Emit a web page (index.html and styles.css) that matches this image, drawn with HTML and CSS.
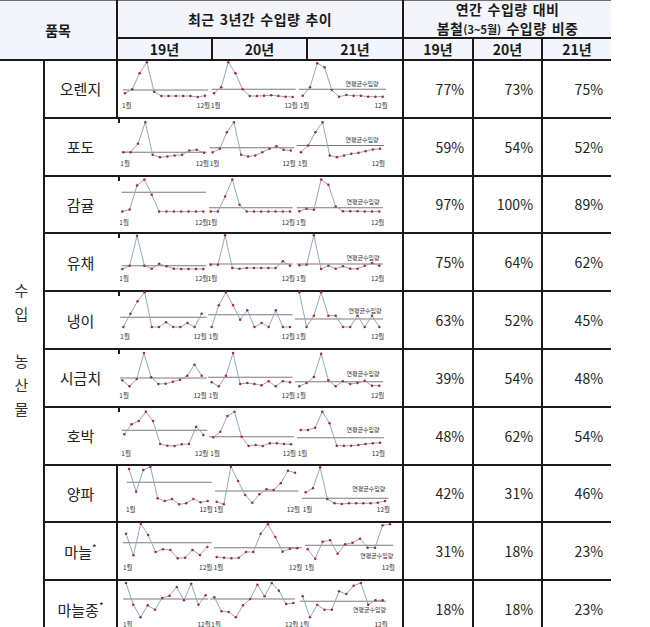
FILE: index.html
```html
<!DOCTYPE html>
<html lang="ko">
<head>
<meta charset="utf-8">
<title>수입 농산물 수입량 추이</title>
<link rel="stylesheet" href="styles.css">
</head>
<body>
<table class="tbl">
  <colgroup>
    <col class="c-cat"><col class="c-item"><col class="c-yr"><col class="c-yr"><col class="c-yr3"><col class="c-pct"><col class="c-pct2"><col class="c-pct2">
  </colgroup>
  <thead>
    <tr class="h1">
      <th colspan="2" rowspan="2" class="h-item">품목</th>
      <th colspan="3" class="h-trend">최근 3년간 수입량 추이</th>
      <th colspan="3" class="h-share"><div class="two"><span>연간 수입량 대비</span><span>봄철<small>(3~5월)</small> 수입량 비중</span></div></th>
    </tr>
    <tr class="h2">
      <th>19년</th><th>20년</th><th>21년</th><th>19년</th><th>20년</th><th class="last">21년</th>
    </tr>
  </thead>
  <tbody>
    <tr>
      <td rowspan="10" class="cat"><div class="vtext"><span>수</span><span>입</span><span class="gap"></span><span>농</span><span>산</span><span>물</span></div></td>
      <td class="item">오렌지</td>
      <td colspan="3" class="chart"><svg class="spark" width="286" height="54"></svg></td>
      <td class="pct">77%</td><td class="pct">73%</td><td class="pct last">75%</td>
    </tr>
    <tr>
      <td class="item">포도</td>
      <td colspan="3" class="chart nol"><svg class="spark" width="286" height="54"></svg></td>
      <td class="pct">59%</td><td class="pct">54%</td><td class="pct last">52%</td>
    </tr>
    <tr>
      <td class="item">감귤</td>
      <td colspan="3" class="chart nol"><svg class="spark" width="286" height="54"></svg></td>
      <td class="pct">97%</td><td class="pct">100%</td><td class="pct last">89%</td>
    </tr>
    <tr>
      <td class="item">유채</td>
      <td colspan="3" class="chart nol"><svg class="spark" width="286" height="54"></svg></td>
      <td class="pct">75%</td><td class="pct">64%</td><td class="pct last">62%</td>
    </tr>
    <tr>
      <td class="item">냉이</td>
      <td colspan="3" class="chart nol"><svg class="spark" width="286" height="54"></svg></td>
      <td class="pct">63%</td><td class="pct">52%</td><td class="pct last">45%</td>
    </tr>
    <tr>
      <td class="item">시금치</td>
      <td colspan="3" class="chart nol"><svg class="spark" width="286" height="54"></svg></td>
      <td class="pct">39%</td><td class="pct">54%</td><td class="pct last">48%</td>
    </tr>
    <tr>
      <td class="item">호박</td>
      <td colspan="3" class="chart nol"><svg class="spark" width="286" height="54"></svg></td>
      <td class="pct">48%</td><td class="pct">62%</td><td class="pct last">54%</td>
    </tr>
    <tr>
      <td class="item">양파</td>
      <td colspan="3" class="chart"><svg class="spark" width="286" height="54"></svg></td>
      <td class="pct">42%</td><td class="pct">31%</td><td class="pct last">46%</td>
    </tr>
    <tr>
      <td class="item">마늘<sup class="ast">*</sup></td>
      <td colspan="3" class="chart"><svg class="spark" width="286" height="54"></svg></td>
      <td class="pct">31%</td><td class="pct">18%</td><td class="pct last">23%</td>
    </tr>
    <tr>
      <td class="item">마늘종<sup class="ast">*</sup></td>
      <td colspan="3" class="chart"><svg class="spark" width="286" height="54"></svg></td>
      <td class="pct">18%</td><td class="pct">18%</td><td class="pct last">23%</td>
    </tr>
  </tbody>
</table>
<script src="charts.js"></script>
</body>
</html>
```

FILE: styles.css
```css
html, body {
  margin: 0;
  padding: 0;
  background: #ffffff;
}

body {
  font-family: "Noto Sans CJK KR", "Noto Sans", sans-serif;
  color: #222222;
}

.tbl {
  border-collapse: collapse;
  table-layout: fixed;
  width: 611px;
  border-top: 1px solid #6f6f6f;
}

.c-cat { width: 44px; }
.c-item { width: 73px; }
.c-yr { width: 95px; }
.c-yr3 { width: 96px; }
.c-pct { width: 70px; }
.c-pct2 { width: 69px; }

.tbl th,
.tbl td {
  padding: 0;
}

/* header */
.tbl thead th {
  background: #f3f5fa;
  color: #1a1a1a;
  font-weight: 700;
  font-size: 14px;
  line-height: 18px;
  text-align: center;
  vertical-align: middle;
}

.h-trend,
.two span {
  letter-spacing: 0.4px;
  word-spacing: 1px;
}

.h1 { height: 37px; }
.h2 { height: 22.5px; }

.h-item {
  border-right: 2px solid #1a1a1a;
  border-bottom: 2px solid #1a1a1a;
}

.h-trend {
  border-right: 2px solid #1a1a1a;
  border-bottom: 2px solid #1a1a1a;
}

.h-share {
  border-bottom: 2px solid #1a1a1a;
}

.two {
  height: 34px;
  display: flex;
  flex-direction: column;
  justify-content: center;
  align-items: center;
}

.two span {
  display: block;
  height: 19px;
  line-height: 19px;
  white-space: nowrap;
}

.two small {
  font-size: 11px;
  letter-spacing: 0;
}

.h2 th {
  border-right: 2px solid #1a1a1a;
  border-bottom: 2px solid #1a1a1a;
}

.h2 th.last {
  border-right: none;
}

/* body */
.tbl tbody tr {
  height: 57.8px;
}

.cat {
  border-right: 2px solid #1a1a1a;
  vertical-align: middle;
}

.vtext {
  display: flex;
  flex-direction: column;
  align-items: center;
  font-size: 15px;
  color: #333333;
}

.vtext span {
  display: block;
  height: 24px;
  line-height: 24px;
}

.vtext .gap {
  height: 23px;
}

.item {
  border-bottom: 2px solid #1a1a1a;
  text-align: center;
  vertical-align: middle;
  font-size: 15px;
  color: #222222;
}

.ast {
  font-size: 10px;
  line-height: 0;
  vertical-align: 6px;
}

.chart {
  border-left: 2px solid #1a1a1a;
  border-right: 2px solid #1a1a1a;
  border-bottom: 2px solid #1a1a1a;
  vertical-align: top;
}

.chart.nol {
  border-left-color: transparent;
  background: linear-gradient(#1a1a1a, #1a1a1a) no-repeat 0 0 / 2px 4px;
}

.pct {
  border-right: 2px solid #1a1a1a;
  border-bottom: 2px solid #1a1a1a;
  text-align: right;
  vertical-align: middle;
  font-size: 14px;
  color: #222222;
}

.tbl td.pct {
  padding-right: 8px;
}

.pct.last {
  border-right: none;
}

/* sparklines */
.spark {
  display: block;
  overflow: visible;
}

.spark .avg {
  stroke: #7a7a7a;
  stroke-width: 1.1;
}

.spark .trend {
  fill: none;
  stroke: #93a5c4;
  stroke-width: 1;
}

.spark .dot {
  fill: #a8283a;
}

.spark .lbl {
  font-family: "Noto Sans CJK KR", sans-serif;
  font-size: 6.5px;
  fill: #333333;
  dominant-baseline: central;
}

.spark .end {
  text-anchor: end;
}

.spark .avgl {
  text-anchor: middle;
  font-size: 6px;
}
```

FILE: charts.js
```js
(function () {
  var NS = 'http://www.w3.org/2000/svg';
  // per row: c = [[firstX, lastX, avgFrom, avgTo, avgY, [12 monthly y]] x3], l = avg label [x, y], ly = month label y
  var DATA = [
    { c: [
      [125, 205, 122.7, 208, 30, [33.3,29.3,13.3,2.3,31.7,36,36,36,36,36,37,35.7]],
      [214, 292.7, 211.7, 295.7, 29.3, [33.3,27.3,2.3,13.3,29.3,36,36,35.7,35.3,36,36.7,37]],
      [302.7, 382.7, 299, 386, 29.3, [35.7,27.3,3.3,7.3,30,36.7,35,35.7,35.7,36.7,36.7,36.7]]
    ], l: [362, 23.3], ly: 45 },
    { c: [
      [123.3, 204, 121.7, 206.7, 34.2, [34.2,34.2,25.8,4.2,36.8,39.2,38.5,37.5,36.8,32.5,31.8,34.8]],
      [212.7, 290.7, 209.7, 294, 29.8, [34.2,30.8,14.2,4.2,36.8,38.5,37.5,34.2,30.8,28.2,31.8,32.5]],
      [301, 380, 296.7, 384, 27.5, [34.2,27.5,14.2,4.2,37.5,39.2,37.5,35.8,34.8,33.2,31.5,30.8]]
    ], l: [362, 21], ly: 45 },
    { c: [
      [122.3, 203.3, 121.7, 206, 16.2, [35.5,33.5,9.5,3.5,18.8,35.5,35.5,35.5,35.5,35.5,35.5,35.5]],
      [210.7, 290, 209, 292.7, 31.8, [35.5,35.5,20.5,3.5,28.8,35.5,35.5,35.5,35.5,35.5,35.5,35.5]],
      [299.3, 379.3, 296.7, 383, 31.8, [35.2,32.8,33.8,3.5,8.8,30.5,35.2,35.2,35.2,35.5,35.5,35.5]]
    ], l: [363, 25.5], ly: 45.5 },
    { c: [
      [122.3, 203.3, 121.7, 206, 32.7, [36,32.7,2.7,32.7,35.7,30.7,33.3,35.7,36,36,36,36]],
      [210.7, 290, 209, 292.7, 31, [31.7,31.7,2.3,35,35.7,35,35,35,35,35,28.3,32.7]],
      [299.3, 379.3, 296.7, 383, 31, [32.3,31.7,2.3,36,32.7,35.7,33.3,35.7,35.7,32.7,30,32.7]]
    ], l: [363, 24], ly: 45 },
    { c: [
      [123.3, 201.7, 120, 206.7, 26.3, [36,22.7,10.3,1.3,36,36,31.3,36,36,32,36,22.7]],
      [211.7, 290, 208, 292.7, 23.7, [36,14.3,1.3,14.3,28.7,19.3,36,32,36,19.3,36,36]],
      [299.3, 379.3, 295, 383, 28, [1.3,36,24.7,1.3,24.7,24.7,36,36,24.7,36,24.7,36]]
    ], l: [365, 19.3], ly: 45.3 },
    { c: [
      [122.3, 201.7, 120, 206.7, 29, [31.3,37.3,30,4,28.3,35,34.7,32.7,30.7,26.7,15.7,26.7]],
      [211.7, 290, 208, 292.7, 28.3, [33.3,37.3,26.7,4,35,34,35,36.3,32.3,37.3,32.3,33.3]],
      [299.3, 379.3, 295, 383, 32.7, [37.3,34,28,4.7,31.3,37.3,32.3,35,34,31.7,36.7,36.7]]
    ], l: [363, 24.7], ly: 45.7 },
    { c: [
      [124.3, 203.3, 121.7, 207.3, 23.3, [27.3,17.3,14,4.7,14,37,38.7,39,37.3,37,19.7,28]],
      [213.3, 291, 209, 294, 29.7, [30.3,24.7,9,4.7,29.7,39,38,39,36.3,36.3,37,37.3]],
      [300.7, 380, 297, 384, 30.7, [23,23,20.7,4.7,16.3,38.7,38.7,38.7,38,37,36.3,35.7]]
    ], l: [363, 22.3], ly: 45.7 },
    { c: [
      [129, 207.7, 126.7, 211.7, 17.3, [4,26.7,5,1.7,33.3,36,34,39.3,38.3,34,37.3,36]],
      [216.7, 295, 215, 298.3, 26, [36.7,39.3,1.7,16,30,37.7,29.3,24.3,25,18.3,5.7,7.7]],
      [305.7, 385, 301.7, 388.3, 33.3, [27.3,23.3,2.3,34,38.3,39,38.3,38.3,38.3,38.3,37.7,36]]
    ], l: [368.7, 23.3], ly: 44.3 },
    { c: [
      [126, 207.3, 122.7, 211.7, 20.7, [11.7,33.3,1.7,13,30,27.3,28,36.3,35.7,28,33,25]],
      [216.7, 297.3, 214, 301.7, 25.7, [35,35.7,36.3,35.7,30,30,11.7,2.3,15,29.7,26.7,26.3]],
      [307.7, 390, 305, 393.3, 23.3, [27.3,36.7,19.7,18.3,31.7,22.3,20.7,16.7,25.7,25.7,3.3,2.3]]
    ], l: [376.7, 33], ly: 45 },
    { c: [
      [126, 205.7, 123.3, 208.3, 19, [3,24.7,37.3,25.3,29.7,18,15.7,7,20.3,3.7,24.7,15.3]],
      [214.3, 293.3, 210, 295, 19, [17.3,31.3,32,37.3,25.3,19,4.7,16.3,3,10.7,24,23]],
      [302.7, 382.7, 300, 386, 21.3, [16.3,37.3,24.7,29.7,29.7,11.3,14,5.7,3,24.7,20.3,20.3]]
    ], l: [369.5, 29.7], ly: 43.5 }
  ];

  function el(tag, attrs, parent) {
    var e = document.createElementNS(NS, tag);
    for (var k in attrs) { e.setAttribute(k, attrs[k]); }
    parent.appendChild(e);
    return e;
  }

  var svgs = document.querySelectorAll('svg.spark');
  for (var i = 0; i < svgs.length; i++) {
    var d = DATA[i];
    if (!d) { continue; }
    var g = el('g', { transform: 'translate(-118,-1)' }, svgs[i]);
    d.c.forEach(function (c) {
      var x0 = c[0], x1 = c[1], ys = c[5];
      el('line', { x1: c[2], y1: c[4], x2: c[3], y2: c[4], 'class': 'avg' }, g);
      var pts = ys.map(function (y, j) {
        return [(x0 + (x1 - x0) * j / 11).toFixed(2), y];
      });
      el('polyline', { points: pts.map(function (p) { return p.join(','); }).join(' '), 'class': 'trend' }, g);
      pts.forEach(function (p) {
        el('circle', { cx: p[0], cy: p[1], r: 1.25, 'class': 'dot' }, g);
      });
      el('text', { x: x0 - 3, y: d.ly, 'class': 'lbl' }, g).textContent = '1월';
      el('text', { x: x1 + 5, y: d.ly, 'class': 'lbl end' }, g).textContent = '12월';
    });
    el('text', { x: d.l[0], y: d.l[1], 'class': 'lbl avgl' }, g).textContent = '연평균수입량';
  }
})();
```
